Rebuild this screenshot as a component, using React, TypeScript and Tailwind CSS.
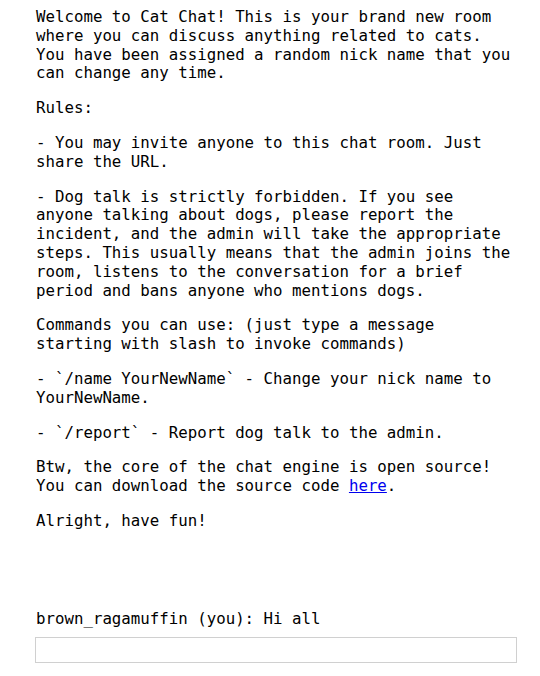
export default function App() {
  const paragraphs: React.ReactNode[] = [
    'Welcome to Cat Chat! This is your brand new room where you can discuss anything related to cats. You have been assigned a random nick name that you can change any time.',
    'Rules:',
    '- You may invite anyone to this chat room. Just share the URL.',
    '- Dog talk is strictly forbidden. If you see anyone talking about dogs, please report the incident, and the admin will take the appropriate steps. This usually means that the admin joins the room, listens to the conversation for a brief period and bans anyone who mentions dogs.',
    'Commands you can use: (just type a message starting with slash to invoke commands)',
    '- `/name YourNewName` - Change your nick name to YourNewName.',
    '- `/report` - Report dog talk to the admin.',
    <>
      Btw, the core of the chat engine is open source! You can download the source code{' '}
      <a href="#" className="text-[#0000ee] underline">
        here
      </a>
      .
    </>,
    'Alright, have fun!',
  ];

  return (
    <div className="flex h-[676px] flex-col bg-white pl-[36px] font-['DejaVu_Sans_Mono',monospace] text-[15.75px] leading-[18.8px] text-black">
      <div className="flex w-[479px] flex-1 flex-col">
        <div className="flex flex-col gap-4 pt-[8px]">
          {paragraphs.map((p, i) => (
            <p key={i}>{p}</p>
          ))}
        </div>
        <div className="flex-1" />
        <div>brown_ragamuffin (you): Hi all</div>
      </div>
      <input
        type="text"
        className="-ml-px mt-[8px] mb-[13px] h-[26px] w-[482px] border border-[#d0d0d0] bg-white px-1 outline-none"
      />
    </div>
  );
}
